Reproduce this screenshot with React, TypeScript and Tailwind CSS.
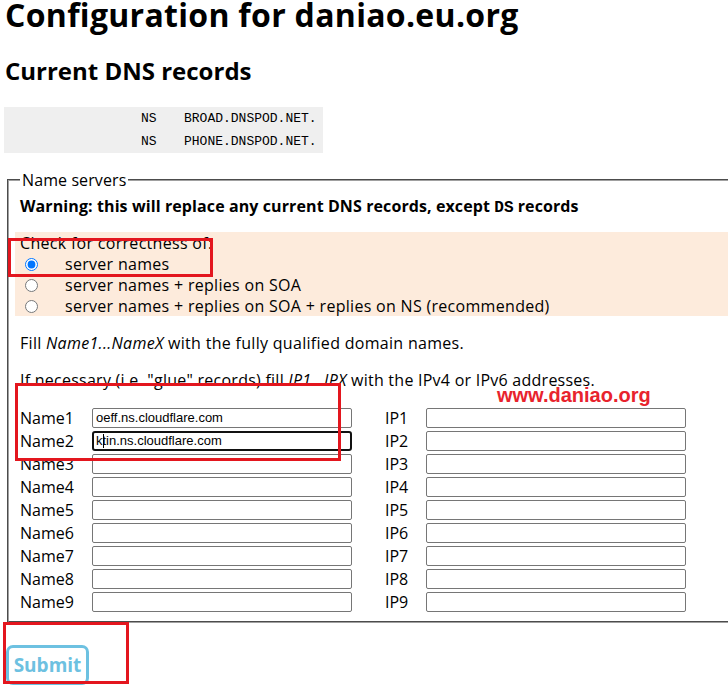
import React from "react";

function Field({ value, focused }: { value?: string; focused?: boolean }) {
  if (focused) {
    const first = value ? value.slice(0, 1) : "";
    const rest = value ? value.slice(1) : "";
    return (
      <div className="h-[20px] w-[260px] overflow-hidden whitespace-nowrap rounded-[3px] border-2 border-[#111111] bg-white pl-[2px] font-['Liberation_Sans',Arial,sans-serif] text-[13px] leading-[16px] tracking-normal text-black">
        <span>{first}</span>
        <span className="relative inline-block h-[14px] w-0 align-[-3px]">
          <span className="absolute left-0 top-0 h-[14px] w-px bg-black" />
        </span>
        <span>{rest}</span>
      </div>
    );
  }
  return (
    <div className="h-[20px] w-[260px] overflow-hidden whitespace-nowrap rounded-[2px] border border-[#767676] bg-white pl-[3px] font-['Liberation_Sans',Arial,sans-serif] text-[13px] leading-[18px] tracking-normal text-black">
      {value}
    </div>
  );
}

function RadioRow({ label, checked }: { label: string; checked?: boolean }) {
  return (
    <div className="flex h-[21px] items-center">
      <input
        type="radio"
        name="check"
        defaultChecked={checked}
        className="m-0 ml-[5px] h-[13px] w-[13px]"
      />
      <span className="ml-[27px] whitespace-nowrap leading-[21px]">{label}</span>
    </div>
  );
}

export default function App() {
  const nums = [1, 2, 3, 4, 5, 6, 7, 8, 9];
  const names: Record<number, string> = {
    1: "oeff.ns.cloudflare.com",
    2: "ktin.ns.cloudflare.com",
  };
  return (
    <div className="relative h-[688px] w-[728px] overflow-hidden bg-white font-['Open_Sans',sans-serif] text-black">
      <h1 className="ml-[5px] mt-[-2px] h-[34px] whitespace-nowrap text-[32px] font-bold leading-[34px] tracking-[0.3px]">
        Configuration for daniao.eu.org
      </h1>
      <h2 className="ml-[5px] mt-[24px] h-[30px] whitespace-nowrap text-[24px] font-bold leading-[30px]">
        Current DNS records
      </h2>
      <div className="ml-[4px] mt-[21px] h-[46px] w-[319px] bg-[#efefef] font-['Liberation_Mono',monospace] text-[13px]">
        <div className="flex h-[23px] items-center whitespace-nowrap">
          <span className="ml-[137px] w-[43px]">NS</span>
          <span>BROAD.DNSPOD.NET.</span>
        </div>
        <div className="flex h-[23px] items-center whitespace-nowrap">
          <span className="ml-[137px] w-[43px]">NS</span>
          <span>PHONE.DNSPOD.NET.</span>
        </div>
      </div>

      <fieldset className="ml-[7px] mt-[17px] w-[780px] border-2 border-[#a0a0a0] pb-[9px] pl-[11px] pr-[11px] pt-[6px] text-[16px] tracking-[0.3px] [border-style:groove]">
        <legend className="px-[2px] text-[16px] leading-[20px] tracking-[0.1px]">Name servers</legend>
        <div className="h-[20px] whitespace-nowrap font-bold leading-[20px] tracking-[0.1px]">
          Warning: this will replace any current DNS records, except{" "}
          <span className="font-['Liberation_Mono',monospace] tracking-normal">DS</span> records
        </div>
        <div className="ml-[-5px] mt-[16px] h-[84px] bg-[#fdebdc] pl-[5px] pt-[1px]">
          <div className="h-[21px] whitespace-nowrap leading-[21px]">Check for correctness of:</div>
          <RadioRow label="server names" checked />
          <RadioRow label="server names + replies on SOA" />
          <RadioRow label="server names + replies on SOA + replies on NS (recommended)" />
        </div>
        <div className="mt-[17px] h-[20px] whitespace-nowrap leading-[20px]">
          Fill <i>Name1...NameX</i> with the fully qualified domain names.
        </div>
        <div className="mt-[17px] h-[20px] whitespace-nowrap leading-[20px] tracking-[0.25px]">
          If necessary (i.e. "glue" records) fill <i>IP1...IPX</i> with the IPv4 or IPv6 addresses.
        </div>
        <div className="mt-[18px] grid grid-cols-[72px_260px_33px_41px_260px] gap-y-[3px] tracking-normal">
          {nums.map((n) => (
            <React.Fragment key={n}>
              <div className="h-[20px] leading-[20px]">Name{n}</div>
              <Field value={names[n]} focused={n === 2} />
              <div />
              <div className="h-[20px] leading-[20px]">IP{n}</div>
              <Field />
            </React.Fragment>
          ))}
        </div>
      </fieldset>

      <div className="ml-[6px] mt-[22px]">
        <button className="h-[40px] w-[83px] rounded-[7px] border-[3px] border-[#6dc1e1] bg-white text-[19px] font-bold leading-none text-[#6dc1e1]">
          Submit
        </button>
      </div>

      <div className="absolute left-[497px] top-[383px] whitespace-nowrap font-['Liberation_Sans',Arial,sans-serif] text-[20px] font-bold leading-[24px] text-[#e8232d]">
        www.daniao.org
      </div>

      <div className="pointer-events-none absolute left-[8px] top-[238px] h-[39px] w-[205px] border-[3px] border-[#e3161e]" />
      <div className="pointer-events-none absolute left-[15px] top-[383px] h-[78px] w-[326px] border-[3px] border-[#e3161e]" />
      <div className="pointer-events-none absolute left-[3px] top-[622px] h-[62px] w-[126px] border-[3px] border-[#e3161e]" />
    </div>
  );
}
